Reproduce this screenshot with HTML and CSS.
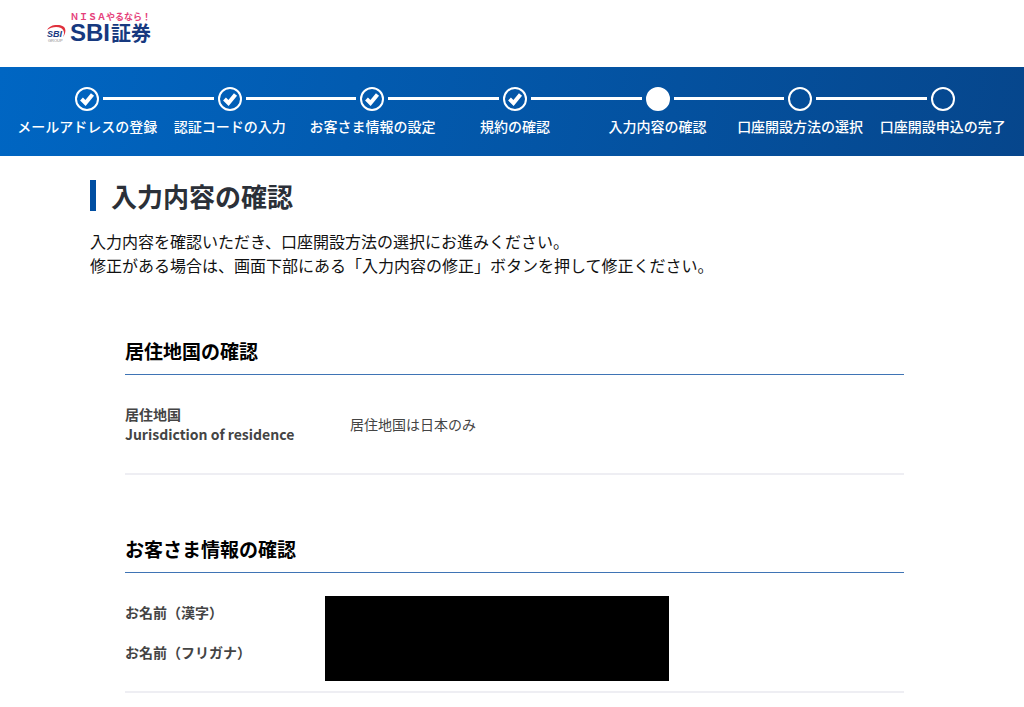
FILE: index.html
```html
<!DOCTYPE html>
<html lang="ja">
<head>
    <meta charset="UTF-8">
    <meta name="viewport" content="width=device-width, initial-scale=1.0">
    <title>入力内容の確認 | SBI証券</title>
    <link rel="stylesheet" href="styles.css">
</head>
<body>
    <header class="site-header">
        <a class="logo" href="#">
            <svg class="logo-group" viewBox="0 0 20 20" aria-hidden="true">
                <path d="M1 5 C3 0 13 -2 18 2 C20 4 20 8 17 12 C19 8 18 5 15 3 C11 1 5 2 1 5 Z" fill="#e0303c"/>
                <text class="logo-mark" x="1" y="12">SBI</text>
                <text class="logo-sub" x="2" y="17">GROUP</text>
            </svg>
            <span class="logo-text">
                <span class="logo-catch">ＮＩＳＡやるなら！</span>
                <span class="logo-name">SBI<span class="logo-kanji">証券</span></span>
            </span>
        </a>
    </header>

    <nav class="steps-bar">
        <ol class="steps">
            <li class="step">
                <svg class="step-icon" viewBox="0 0 24 24"><circle cx="12" cy="12" r="11"/><path d="M6.5 12 L10.5 16 L17.5 7.5"/></svg>
                <span>メールアドレスの登録</span>
            </li>
            <li class="step">
                <svg class="step-icon" viewBox="0 0 24 24"><circle cx="12" cy="12" r="11"/><path d="M6.5 12 L10.5 16 L17.5 7.5"/></svg>
                <span>認証コードの入力</span>
            </li>
            <li class="step">
                <svg class="step-icon" viewBox="0 0 24 24"><circle cx="12" cy="12" r="11"/><path d="M6.5 12 L10.5 16 L17.5 7.5"/></svg>
                <span>お客さま情報の設定</span>
            </li>
            <li class="step">
                <svg class="step-icon" viewBox="0 0 24 24"><circle cx="12" cy="12" r="11"/><path d="M6.5 12 L10.5 16 L17.5 7.5"/></svg>
                <span>規約の確認</span>
            </li>
            <li class="step current" aria-current="step">
                <svg class="step-icon" viewBox="0 0 24 24"><circle cx="12" cy="12" r="11"/></svg>
                <span>入力内容の確認</span>
            </li>
            <li class="step">
                <svg class="step-icon" viewBox="0 0 24 24"><circle cx="12" cy="12" r="11"/></svg>
                <span>口座開設方法の選択</span>
            </li>
            <li class="step">
                <svg class="step-icon" viewBox="0 0 24 24"><circle cx="12" cy="12" r="11"/></svg>
                <span>口座開設申込の完了</span>
            </li>
        </ol>
    </nav>

    <main class="content">
        <h1>入力内容の確認</h1>
        <p class="lead">入力内容を確認いただき、口座開設方法の選択にお進みください。<br>修正がある場合は、画面下部にある「入力内容の修正」ボタンを押して修正ください。</p>

        <section class="confirm">
            <h2>居住地国の確認</h2>
            <dl class="confirm-list">
                <dt>居住地国<br>Jurisdiction of residence</dt>
                <dd>居住地国は日本のみ</dd>
            </dl>
        </section>

        <section class="confirm">
            <h2>お客さま情報の確認</h2>
            <dl class="confirm-list">
                <dt>お名前（漢字）</dt>
                <dd></dd>
                <dt>お名前（フリガナ）</dt>
                <dd></dd>
            </dl>
            <div class="mask"></div>
        </section>
    </main>
</body>
</html>
```
FILE: styles.css
```css
* {
    box-sizing: border-box;
}
body {
    margin: 0;
    background-color: #fff;
    color: #111;
    font-family: "Noto Sans CJK JP", sans-serif;
    font-size: 16px;
    line-height: 24px;
}

/* header */
.site-header {
    height: 67px;
    padding: 12px 46px 0;
}
.logo {
    display: inline-flex;
    align-items: flex-end;
    gap: 4px;
    color: #17397f;
    text-decoration: none;
}
.logo-group {
    width: 20px;
    height: 20px;
}
.logo-mark {
    font: italic bold 9px "Liberation Sans", sans-serif;
    fill: #17397f;
}
.logo-sub {
    font: 4px "Liberation Sans", sans-serif;
    fill: #888;
}
.logo-text {
    display: flex;
    flex-direction: column;
}
.logo-catch {
    color: #e5407a;
    font-size: 9px;
    font-weight: bold;
    line-height: 10px;
}
.logo-name {
    font-family: "Liberation Sans", "Noto Sans CJK JP", sans-serif;
    font-size: 24px;
    font-weight: bold;
    line-height: 22px;
}
.logo-kanji {
    margin-left: 1px;
    font-size: 20px;
}

/* progress steps */
.steps-bar {
    padding: 20px 10px 20px 16px;
    background: linear-gradient(100deg, #0066c3, #06468c);
}
.steps {
    display: grid;
    grid-template-columns: repeat(7, 1fr);
    margin: 0;
    padding: 0;
    list-style: none;
}
.step {
    position: relative;
    display: flex;
    flex-direction: column;
    align-items: center;
    gap: 5px;
    color: #fff;
    font-size: 14px;
    font-weight: 500;
    line-height: 20px;
    white-space: nowrap;
}
.step:not(:last-child)::after {
    content: "";
    position: absolute;
    top: 10px;
    left: calc(50% + 16px);
    width: calc(100% - 32px);
    height: 3px;
    background-color: #fff;
}
.step-icon {
    width: 24px;
    height: 24px;
    fill: none;
    stroke: #fff;
    stroke-width: 2;
}
.step-icon path {
    stroke-width: 4;
}
.current .step-icon {
    fill: #fff;
}

/* main */
.content {
    padding: 24px 85px 40px 90px;
}
h1 {
    margin: 0 0 18px;
    padding-left: 15px;
    border-left: 6px solid #004ea2;
    color: #2b3038;
    font-size: 26px;
    line-height: 31px;
}
.lead {
    margin: 0;
}
.confirm {
    position: relative;
    margin: 60px 35px 0;
}
h2 {
    margin: 0;
    padding-bottom: 9px;
    border-bottom: 1px solid #3f74b5;
    color: #000;
    font-size: 19px;
    line-height: 28px;
}
.confirm-list {
    display: grid;
    grid-template-columns: 225px 1fr;
    align-items: center;
    row-gap: 20px;
    margin: 0;
    padding: 29px 0;
    border-bottom: 2px solid #eeeef3;
    font-size: 14px;
    line-height: 20px;
}
.confirm-list dt {
    color: #444;
    font-weight: bold;
}
.confirm-list dd {
    margin: 0;
    color: #444;
}
.mask {
    position: absolute;
    top: 61px;
    left: 200px;
    width: 344px;
    height: 85px;
    background-color: #000;
}
```
